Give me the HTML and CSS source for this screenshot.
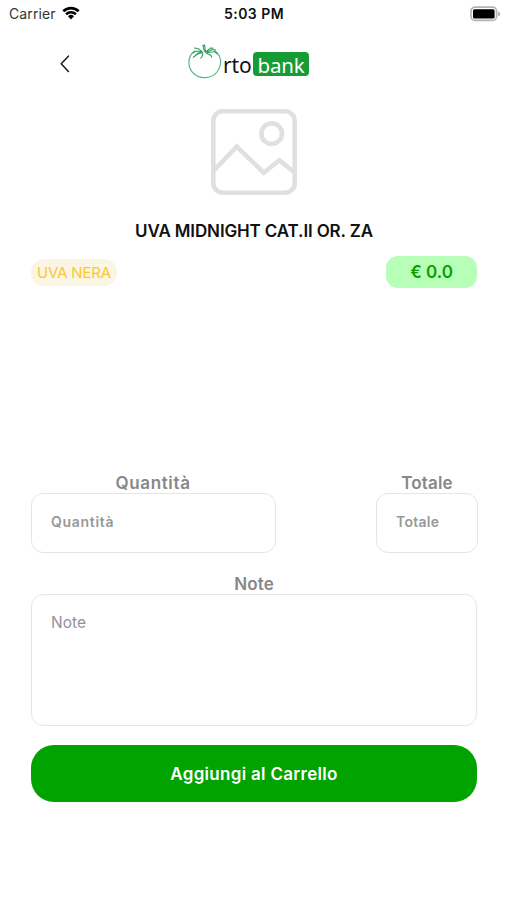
FILE: index.html
```html
<!DOCTYPE html>
<html lang="it">
<head>
<meta charset="utf-8">
<title>Ortobank</title>
<link rel="stylesheet" href="styles.css">
</head>
<body>
<header class="status">
  <div class="carrier"><span>Carrier</span>
    <svg width="18" height="14" viewBox="0 0 18 14"><path d="M.4 4.3a12.3 12.3 0 0 1 17.2 0l-1.8 1.9a9.7 9.7 0 0 0-13.6 0z"/><path d="M3.2 7.3a8.2 8.2 0 0 1 11.6 0l-1.8 1.900a5.7 5.7 0 0 0-8 0z"/><path d="M6 10.2a4.3 4.3 0 0 1 6 0L9 13.6z"/></svg>
  </div>
  <div class="clock">5:03 PM</div>
  <svg class="battery" width="31" height="16" viewBox="0 0 31 16"><rect x="1" y="1.2" width="25.6" height="13.2" rx="4" fill="#fff" stroke="#b4b4b4" stroke-width="1.7"/><rect x="3" y="3.2" width="21.6" height="9.2" rx="1.500"/><path d="M28.2 5.6v4.6q2-.7 2-2.3t-2-2.3z" fill="#aaa"/></svg>
</header>
<nav class="nav">
  <svg class="back" width="12" height="20" viewBox="0 0 12 20"><path d="M9.4 2.2 2.2 9.7l7.2 7.8" fill="none" stroke="#222" stroke-width="1.6" stroke-linecap="round" stroke-linejoin="round"/></svg>
  <div class="logo">
    <svg width="35" height="36" viewBox="0 0 35 36" fill="none" stroke="#2f9e63">
      <path d="M7 6.800C-1.500 13-.3 24 5.700 29.500c6.500 6 18 5.300 23.300-1.500 5.600-7.200 4.700-16.500-2.500-21.500" stroke="#57b885" stroke-width="1.200"/>
      <path d="M16.500 8 15 1.500l1.600-.4.900 6.400M17 8.500l5.500-4.500 3 .3M18 9l8.500-1.500 3 2.500M18 9l5 2.500 1 2M15 9l-1 3.500-1.500 2M15 8.500 9.500 10 5 13.500M14.500 8 8.500 7 4.500 9M14 7.500 10 4.500 6 4M14.500 8.500 10 9l-3 3M19 8l5-2.500 4 .5" stroke-width="1.100"/>
    </svg>
    <span class="rto">rto</span><span class="bank">bank</span>
  </div>
</nav>
<main class="product">
  <svg class="photo" width="88" height="88" viewBox="0 0 88 88" fill="none" stroke="#e0e0e0" stroke-width="4.600"><rect x="3.300" y="3.300" width="81.400" height="81.400" rx="9.500"/><circle cx="61.700" cy="25.700" r="10.300"/><path d="M4 62.500 26.700 38.500 53.800 64.700 69.300 52.300 84 64"/></svg>
  <h1>UVA MIDNIGHT CAT.II OR. ZA</h1>
  <div class="info"><span class="tag">UVA NERA</span><span class="price">€ 0.0</span></div>
  <form class="order">
    <div class="row">
      <div class="field quantity"><label>Quantità</label><div class="box"><span>Quantità</span></div></div>
      <div class="field total"><label>Totale</label><div class="box"><span>Totale</span></div></div>
    </div>
    <div class="field note"><label>Note</label><div class="box"><span>Note</span></div></div>
    <button type="button"><span>Aggiungi al Carrello</span></button>
  </form>
</main>
</body>
</html>
```
FILE: styles.css
```css
* { box-sizing: border-box; }
body { margin: 0; height: 900px; background: #fff; color: #111; font-family: Inter, sans-serif; overflow: hidden; }
svg { display: block; flex: none; }
.status { height: 28px; display: grid; grid-template-columns: 1fr auto 1fr; padding: 0 6px 0 9px; align-items: center; font-size: 14px; line-height: 28px; }
.carrier { display: flex; align-items: center; gap: 6px; color: #333; letter-spacing: .1px; }
.carrier svg { margin-bottom: 3px; }
.clock { margin-right: 2px; font-weight: 600; font-size: 14px; letter-spacing: .45px; }
.battery { justify-self: end; margin-bottom: 1px; }
.nav { height: 72px; display: flex; padding: 16px 0 0 59px; }
.back { margin-top: 10px; }
.logo { display: flex; height: 36px; margin-left: 117px; font-family: "Noto Sans", sans-serif; font-size: 21px; }
.rto { width: 30px; line-height: 42px; letter-spacing: -.1px; }
.bank { width: 56px; height: 24px; margin-top: 8px; border-radius: 4px; background: #169c35; color: #fff; text-align: center; line-height: 26px; font-size: 20.5px; letter-spacing: -.2px; }
.product { padding: 8px 30px 0 31px; }
.photo { margin: 0 auto; }
h1 { margin: 22px 0 0; height: 27px; line-height: 27px; text-align: center; font-size: 17px; font-weight: 600; letter-spacing: -.13px; white-space: nowrap; }
.info { display: flex; justify-content: space-between; align-items: center; height: 32px; margin-top: 11px; }
.tag { width: 86px; height: 27px; border-radius: 13px; background: #fbf5e3; color: #fac832; text-align: center; font-size: 15px; line-height: 27px; letter-spacing: -.2px; white-space: nowrap; }
.price { width: 91px; height: 32px; border-radius: 12px; background: #b7ffb7; color: #08a008; text-align: center; font-size: 17px; line-height: 33px; font-weight: 600; }
.order { margin-top: 184px; }
.row { display: flex; justify-content: space-between; margin-right: -1px; }
.field { display: flex; flex-direction: column; }
.field label { height: 21px; line-height: 23px; text-align: center; font-size: 17px; font-weight: 600; color: #888; letter-spacing: .15px; }
.box { border: 1px solid #e5e5e5; border-radius: 12px; padding: 17px 19px; font-size: 14px; line-height: 21px; font-weight: 600; color: #999; }
.quantity { width: 245px; }
.quantity label { padding-right: 1px; letter-spacing: .65px; }
.quantity .box { letter-spacing: .7px; }
.total { width: 102px; }
.total .box { letter-spacing: .25px; }
.row .box { height: 60px; }
.note { margin-top: 20px; }
.note .box { height: 132px; font-size: 15.500px; font-weight: 400; color: #8f929c; }
button { display: block; width: 100%; height: 57px; margin-top: 19px; border: 0; border-radius: 23px; background: #00a300; color: #fff; font: 600 17px/58px Inter, sans-serif; padding: 0; letter-spacing: .3px; }
```
